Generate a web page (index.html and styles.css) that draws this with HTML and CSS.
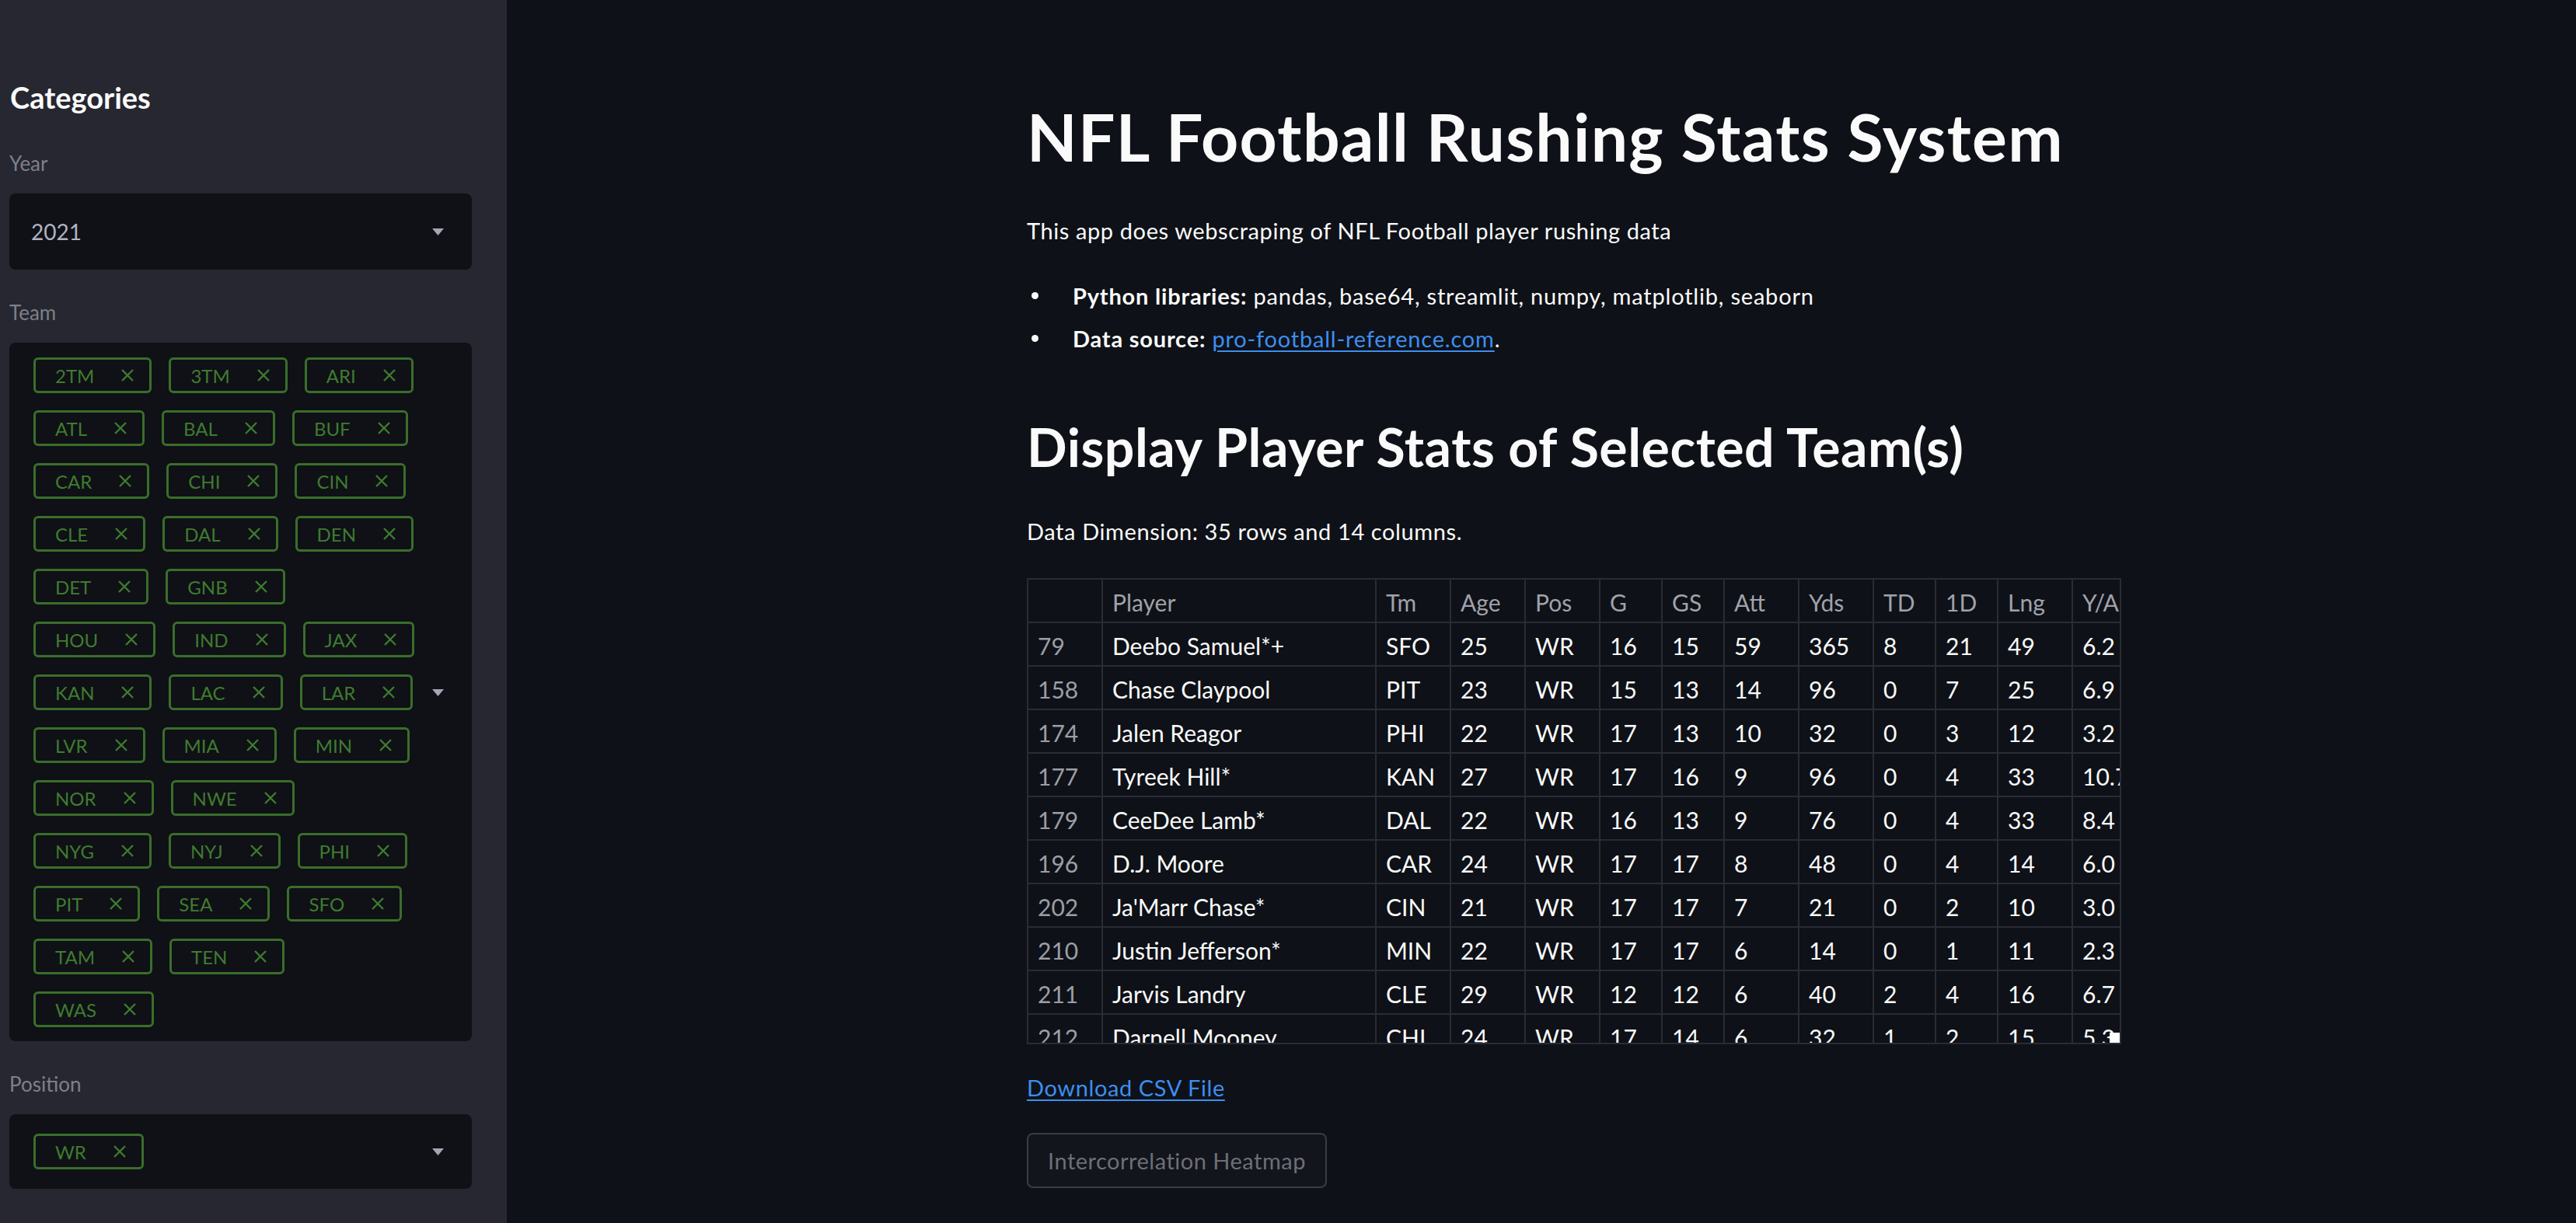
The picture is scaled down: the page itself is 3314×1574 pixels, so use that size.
FILE: index.html
```html
<!DOCTYPE html>
<html lang="en">
<head>
<meta charset="utf-8">
<title>NFL Football Rushing Stats System</title>
<link rel="stylesheet" href="styles.css">
</head>
<body>
<div class="app">
  <aside class="sidebar">
    <h2 class="side-title">Categories</h2>

    <div class="widget first">
      <label class="w-label">Year</label>
      <div class="select year-select">
        <span class="sel-value">2021</span>
        <svg class="caret" viewBox="0 0 15 9"><path d="M0 0H15L7.5 9Z"/></svg>
      </div>
    </div>

    <div class="widget">
      <label class="w-label">Team</label>
      <div class="select team-select">
        <div class="tags">
          <div class="tag-row">
            <span class="tag"><span>2TM</span><svg class="x" viewBox="0 0 18 18"><path d="M2 2L16 16M16 2L2 16"/></svg></span>
            <span class="tag"><span>3TM</span><svg class="x" viewBox="0 0 18 18"><path d="M2 2L16 16M16 2L2 16"/></svg></span>
            <span class="tag"><span>ARI</span><svg class="x" viewBox="0 0 18 18"><path d="M2 2L16 16M16 2L2 16"/></svg></span>
          </div>
          <div class="tag-row">
            <span class="tag"><span>ATL</span><svg class="x" viewBox="0 0 18 18"><path d="M2 2L16 16M16 2L2 16"/></svg></span>
            <span class="tag"><span>BAL</span><svg class="x" viewBox="0 0 18 18"><path d="M2 2L16 16M16 2L2 16"/></svg></span>
            <span class="tag"><span>BUF</span><svg class="x" viewBox="0 0 18 18"><path d="M2 2L16 16M16 2L2 16"/></svg></span>
          </div>
          <div class="tag-row">
            <span class="tag"><span>CAR</span><svg class="x" viewBox="0 0 18 18"><path d="M2 2L16 16M16 2L2 16"/></svg></span>
            <span class="tag"><span>CHI</span><svg class="x" viewBox="0 0 18 18"><path d="M2 2L16 16M16 2L2 16"/></svg></span>
            <span class="tag"><span>CIN</span><svg class="x" viewBox="0 0 18 18"><path d="M2 2L16 16M16 2L2 16"/></svg></span>
          </div>
          <div class="tag-row">
            <span class="tag"><span>CLE</span><svg class="x" viewBox="0 0 18 18"><path d="M2 2L16 16M16 2L2 16"/></svg></span>
            <span class="tag"><span>DAL</span><svg class="x" viewBox="0 0 18 18"><path d="M2 2L16 16M16 2L2 16"/></svg></span>
            <span class="tag"><span>DEN</span><svg class="x" viewBox="0 0 18 18"><path d="M2 2L16 16M16 2L2 16"/></svg></span>
          </div>
          <div class="tag-row">
            <span class="tag"><span>DET</span><svg class="x" viewBox="0 0 18 18"><path d="M2 2L16 16M16 2L2 16"/></svg></span>
            <span class="tag"><span>GNB</span><svg class="x" viewBox="0 0 18 18"><path d="M2 2L16 16M16 2L2 16"/></svg></span>
          </div>
          <div class="tag-row">
            <span class="tag"><span>HOU</span><svg class="x" viewBox="0 0 18 18"><path d="M2 2L16 16M16 2L2 16"/></svg></span>
            <span class="tag"><span>IND</span><svg class="x" viewBox="0 0 18 18"><path d="M2 2L16 16M16 2L2 16"/></svg></span>
            <span class="tag"><span>JAX</span><svg class="x" viewBox="0 0 18 18"><path d="M2 2L16 16M16 2L2 16"/></svg></span>
          </div>
          <div class="tag-row">
            <span class="tag"><span>KAN</span><svg class="x" viewBox="0 0 18 18"><path d="M2 2L16 16M16 2L2 16"/></svg></span>
            <span class="tag"><span>LAC</span><svg class="x" viewBox="0 0 18 18"><path d="M2 2L16 16M16 2L2 16"/></svg></span>
            <span class="tag"><span>LAR</span><svg class="x" viewBox="0 0 18 18"><path d="M2 2L16 16M16 2L2 16"/></svg></span>
          </div>
          <div class="tag-row">
            <span class="tag"><span>LVR</span><svg class="x" viewBox="0 0 18 18"><path d="M2 2L16 16M16 2L2 16"/></svg></span>
            <span class="tag"><span>MIA</span><svg class="x" viewBox="0 0 18 18"><path d="M2 2L16 16M16 2L2 16"/></svg></span>
            <span class="tag"><span>MIN</span><svg class="x" viewBox="0 0 18 18"><path d="M2 2L16 16M16 2L2 16"/></svg></span>
          </div>
          <div class="tag-row">
            <span class="tag"><span>NOR</span><svg class="x" viewBox="0 0 18 18"><path d="M2 2L16 16M16 2L2 16"/></svg></span>
            <span class="tag"><span>NWE</span><svg class="x" viewBox="0 0 18 18"><path d="M2 2L16 16M16 2L2 16"/></svg></span>
          </div>
          <div class="tag-row">
            <span class="tag"><span>NYG</span><svg class="x" viewBox="0 0 18 18"><path d="M2 2L16 16M16 2L2 16"/></svg></span>
            <span class="tag"><span>NYJ</span><svg class="x" viewBox="0 0 18 18"><path d="M2 2L16 16M16 2L2 16"/></svg></span>
            <span class="tag"><span>PHI</span><svg class="x" viewBox="0 0 18 18"><path d="M2 2L16 16M16 2L2 16"/></svg></span>
          </div>
          <div class="tag-row">
            <span class="tag"><span>PIT</span><svg class="x" viewBox="0 0 18 18"><path d="M2 2L16 16M16 2L2 16"/></svg></span>
            <span class="tag"><span>SEA</span><svg class="x" viewBox="0 0 18 18"><path d="M2 2L16 16M16 2L2 16"/></svg></span>
            <span class="tag"><span>SFO</span><svg class="x" viewBox="0 0 18 18"><path d="M2 2L16 16M16 2L2 16"/></svg></span>
          </div>
          <div class="tag-row">
            <span class="tag"><span>TAM</span><svg class="x" viewBox="0 0 18 18"><path d="M2 2L16 16M16 2L2 16"/></svg></span>
            <span class="tag"><span>TEN</span><svg class="x" viewBox="0 0 18 18"><path d="M2 2L16 16M16 2L2 16"/></svg></span>
          </div>
          <div class="tag-row">
            <span class="tag"><span>WAS</span><svg class="x" viewBox="0 0 18 18"><path d="M2 2L16 16M16 2L2 16"/></svg></span>
          </div>
        </div>
        <svg class="caret" viewBox="0 0 15 9"><path d="M0 0H15L7.5 9Z"/></svg>
      </div>
    </div>

    <div class="widget">
      <label class="w-label">Position</label>
      <div class="select pos-select">
        <span class="tag"><span>WR</span><svg class="x" viewBox="0 0 18 18"><path d="M2 2L16 16M16 2L2 16"/></svg></span>
        <svg class="caret" viewBox="0 0 15 9"><path d="M0 0H15L7.5 9Z"/></svg>
      </div>
    </div>
  </aside>

  <main class="main">
    <div class="block">
      <h1 class="title">NFL Football Rushing Stats System</h1>
      <p class="text intro">This app does webscraping of NFL Football player rushing data</p>
      <ul class="libs">
        <li><span><strong>Python libraries:</strong> pandas, base64, streamlit, numpy, matplotlib, seaborn</span></li>
        <li><span><strong>Data source:</strong> <a class="link" href="#">pro-football-reference.com</a>.</span></li>
      </ul>
      <h2 class="subtitle">Display Player Stats of Selected Team(s)</h2>
      <p class="text dim">Data Dimension: 35 rows and 14 columns.</p>

      <div class="df">
        <table class="grid">
          <colgroup>
            <col class="c-idx"><col class="c-player"><col class="c-m"><col class="c-m"><col class="c-m">
            <col class="c-s"><col class="c-s"><col class="c-m"><col class="c-m"><col class="c-s"><col class="c-s"><col class="c-m"><col class="c-m">
          </colgroup>
          <thead>
            <tr><th></th><th>Player</th><th>Tm</th><th>Age</th><th>Pos</th><th>G</th><th>GS</th><th>Att</th><th>Yds</th><th>TD</th><th>1D</th><th>Lng</th><th class="narrow">Y/A</th></tr>
          </thead>
          <tbody>
            <tr><td class="idx">79</td><td>Deebo Samuel*+</td><td>SFO</td><td>25</td><td>WR</td><td>16</td><td>15</td><td>59</td><td>365</td><td>8</td><td>21</td><td>49</td><td>6.2</td></tr>
            <tr><td class="idx">158</td><td>Chase Claypool</td><td>PIT</td><td>23</td><td>WR</td><td>15</td><td>13</td><td>14</td><td>96</td><td>0</td><td>7</td><td>25</td><td>6.9</td></tr>
            <tr><td class="idx">174</td><td>Jalen Reagor</td><td>PHI</td><td>22</td><td>WR</td><td>17</td><td>13</td><td>10</td><td>32</td><td>0</td><td>3</td><td>12</td><td>3.2</td></tr>
            <tr><td class="idx">177</td><td>Tyreek Hill*</td><td>KAN</td><td>27</td><td>WR</td><td>17</td><td>16</td><td>9</td><td>96</td><td>0</td><td>4</td><td>33</td><td>10.7</td></tr>
            <tr><td class="idx">179</td><td>CeeDee Lamb*</td><td>DAL</td><td>22</td><td>WR</td><td>16</td><td>13</td><td>9</td><td>76</td><td>0</td><td>4</td><td>33</td><td>8.4</td></tr>
            <tr><td class="idx">196</td><td>D.J. Moore</td><td>CAR</td><td>24</td><td>WR</td><td>17</td><td>17</td><td>8</td><td>48</td><td>0</td><td>4</td><td>14</td><td>6.0</td></tr>
            <tr><td class="idx">202</td><td>Ja'Marr Chase*</td><td>CIN</td><td>21</td><td>WR</td><td>17</td><td>17</td><td>7</td><td>21</td><td>0</td><td>2</td><td>10</td><td>3.0</td></tr>
            <tr><td class="idx">210</td><td>Justin Jefferson*</td><td>MIN</td><td>22</td><td>WR</td><td>17</td><td>17</td><td>6</td><td>14</td><td>0</td><td>1</td><td>11</td><td>2.3</td></tr>
            <tr><td class="idx">211</td><td>Jarvis Landry</td><td>CLE</td><td>29</td><td>WR</td><td>12</td><td>12</td><td>6</td><td>40</td><td>2</td><td>4</td><td>16</td><td>6.7</td></tr>
            <tr><td class="idx">212</td><td>Darnell Mooney</td><td>CHI</td><td>24</td><td>WR</td><td>17</td><td>14</td><td>6</td><td>32</td><td>1</td><td>2</td><td>15</td><td>5.3</td></tr>
          </tbody>
        </table>
        <span class="scroll-thumb"></span>
      </div>

      <p class="text dl"><a class="link" href="#">Download CSV File</a></p>
      <button class="btn" type="button">Intercorrelation Heatmap</button>
    </div>
  </main>
</div>
</body>
</html>
```

FILE: styles.css
```css
* {
  box-sizing: border-box;
  margin: 0;
  padding: 0;
}

html, body {
  height: 100%;
}

body {
  background: #0e1117;
  color: #fafafa;
  font-family: Lato, "Noto Sans", sans-serif;
  overflow: hidden;
}

.app {
  display: flex;
  height: 1574px;
}

/* ---------- Sidebar ---------- */
.sidebar {
  width: 652px;
  flex: none;
  background: #262730;
  padding: 102px 45px 0 12px;
}

.side-title {
  font-size: 38px;
  line-height: 46px;
  font-weight: 700;
  padding-left: 1px;
  color: #fafafa;
}

.widget {
  margin-top: 39px;
}

.widget.first {
  margin-top: 46px;
}

.w-label {
  display: block;
  font-size: 26px;
  line-height: 32px;
  color: #7e8089;
  margin-bottom: 23px;
}

.select {
  background: #0f1116;
  border-radius: 8px;
  display: flex;
  align-items: center;
  padding-right: 36px;
}

.year-select {
  height: 98px;
  padding-left: 28px;
}

.sel-value {
  font-size: 28px;
  color: #b1b3c2;
}

.caret {
  width: 15px;
  height: 9px;
  fill: #a4a6b4;
  flex: none;
  margin-left: auto;
}

.team-select {
  padding-top: 19px;
  padding-bottom: 18px;
  padding-left: 31px;
}

.tags {
  display: flex;
  flex-direction: column;
  gap: 22px;
}

.tag-row {
  display: flex;
  gap: 22px;
}

.tag {
  height: 46px;
  border: 3px solid #3a6e2a;
  border-radius: 6px;
  display: flex;
  align-items: center;
  padding: 0 19px 0 25px;
  color: #3f7b2f;
  font-size: 24px;
  flex: none;
}

.tag .x {
  width: 18px;
  height: 18px;
  margin-left: 34px;
  fill: none;
  stroke: currentColor;
  stroke-width: 2.4;
}

.pos-select {
  height: 96px;
  padding-left: 31px;
}

/* ---------- Main ---------- */
.main {
  flex: 1;
  display: flex;
  justify-content: center;
  padding: 127px 0 0 84px;
}

.block {
  width: 1408px;
}

.title {
  font-size: 84px;
  line-height: 98px;
  font-weight: 700;
  letter-spacing: 1.3px;
}

.text {
  font-size: 29px;
  line-height: 43px;
  letter-spacing: 0.6px;
}

.intro {
  margin-top: 50px;
}

.libs {
  margin-top: 41px;
  list-style: none;
  font-size: 29px;
  line-height: 43px;
  letter-spacing: 0.8px;
}

.libs li {
  display: flex;
  align-items: center;
  margin-bottom: 12px;
}

.libs li:last-child {
  margin-bottom: 0;
}

.libs li::before {
  content: "";
  width: 9px;
  height: 9px;
  border-radius: 50%;
  background: #fafafa;
  margin: 0 44px 0 6px;
  flex: none;
}

.libs strong {
  font-weight: 700;
}

.link {
  color: #3d8ef0;
  text-decoration: underline;
  text-decoration-thickness: 2px;
  text-underline-offset: 4px;
}

.subtitle {
  margin-top: 77px;
  font-size: 68px;
  line-height: 82px;
  font-weight: 700;
  letter-spacing: 0.5px;
}

.dim {
  margin-top: 46px;
}

/* ---------- Dataframe ---------- */
.df {
  position: relative;
  margin-top: 39px;
  width: 1408px;
  height: 600px;
  border: 2px solid #2a2c35;
  overflow: hidden;
}

.grid {
  table-layout: fixed;
  border-collapse: separate;
  border-spacing: 0;
  width: 1440px;
}

.c-idx { width: 96px; }
.c-player { width: 352px; }
.c-m { width: 96px; }
.c-s { width: 80px; }

.grid th,
.grid td {
  height: 56px;
  border-right: 2px solid #2a2c35;
  border-bottom: 2px solid #2a2c35;
  padding: 5px 0 0 12px;
  font-size: 30px;
  line-height: 49px;
  text-align: left;
  vertical-align: top;
  white-space: nowrap;
  overflow: hidden;
}

.grid th {
  font-weight: 400;
  color: #a0a2aa;
}

.grid th.narrow {
  letter-spacing: -1px;
}

.grid td {
  color: #fafafa;
}

.grid td.idx {
  color: #9c9ea6;
}

.scroll-thumb {
  position: absolute;
  right: 0;
  bottom: 0;
  width: 13px;
  height: 13px;
  background: #ffffff;
}

.dl {
  margin-top: 34px;
}

.btn {
  display: block;
  margin-top: 37px;
  height: 71px;
  padding: 0 25px;
  border: 2px solid #3a3c45;
  border-radius: 8px;
  background: #13151c;
  color: #6d6f78;
  font-family: Lato, "Noto Sans", sans-serif;
  font-size: 29px;
  letter-spacing: 0.5px;
}
```
